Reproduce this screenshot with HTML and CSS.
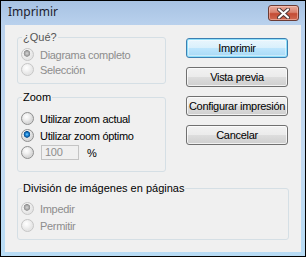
FILE: index.html
```html
<!DOCTYPE html>
<html lang="es">
<head>
    <meta charset="UTF-8">
    <title>Imprimir</title>
    <link rel="stylesheet" href="styles.css">
</head>
<body>
    <div class="window">
        <div class="titlebar">
            <span class="title">Imprimir</span>
            <button class="close" title="Cerrar">
                <svg width="13" height="11" viewBox="0 0 13 11">
                    <path d="M2 1.5 L11 9.5 M11 1.5 L2 9.5" stroke="#4a3636" stroke-width="4" stroke-linecap="round"/>
                    <path d="M2 1.5 L11 9.5 M11 1.5 L2 9.5" stroke="#ffffff" stroke-width="2.2" stroke-linecap="round"/>
                </svg>
            </button>
        </div>

        <div class="client">
            <div class="top">
                <div class="options">
                    <fieldset class="group group-what disabled">
                        <legend>¿Qué?</legend>
                        <label class="radio"><span class="dot checked"></span>Diagrama completo</label>
                        <label class="radio"><span class="dot"></span>Selección</label>
                    </fieldset>

                    <fieldset class="group group-zoom">
                        <legend>Zoom</legend>
                        <label class="radio"><span class="dot"></span>Utilizar zoom actual</label>
                        <label class="radio"><span class="dot checked"></span>Utilizar zoom óptimo</label>
                        <label class="radio"><span class="dot"></span><span class="num">100</span><span class="pct">%</span></label>
                    </fieldset>
                </div>

                <div class="actions">
                    <button class="btn default">Imprimir</button>
                    <button class="btn">Vista previa</button>
                    <button class="btn">Configurar impresión</button>
                    <button class="btn">Cancelar</button>
                </div>
            </div>

            <fieldset class="group group-split disabled">
                <legend>División de imágenes en páginas</legend>
                <label class="radio"><span class="dot checked"></span>Impedir</label>
                <label class="radio"><span class="dot"></span>Permitir</label>
            </fieldset>
        </div>
    </div>
</body>
</html>
```

FILE: styles.css
```css
* {
    margin: 0;
    padding: 0;
    box-sizing: border-box;
}

body {
    background-color: #ffffff;
    font-family: "Liberation Sans", Arial, sans-serif;
    font-size: 11px;
    letter-spacing: -0.3px;
    color: #000;
}

.window {
    width: 306px;
    height: 257px;
    border: 1px solid #000;
    padding: 0 4px 4px 4px;
    background: linear-gradient(to bottom, #a7c2e3 0, #b9d1ed 24px, #c4daf1 60%, #b8dcf5 100%);
    display: flex;
    flex-direction: column;
}

.titlebar {
    height: 24px;
    display: flex;
    justify-content: space-between;
    align-items: flex-start;
}

.title {
    font-family: "Noto Sans", sans-serif;
    font-size: 12px;
    letter-spacing: 0;
    line-height: 16px;
    padding: 3px 0 0 3px;
    color: #1b1b2e;
}

.close {
    width: 31px;
    height: 16px;
    margin: 4px 2px 0 0;
    border: 1px solid #6b3b34;
    border-radius: 3px;
    background: linear-gradient(to bottom, #e9a99b 0, #d9826f 45%, #c44b35 55%, #cf6a52 100%);
    box-shadow: inset 0 0 0 1px rgba(255, 210, 200, 0.5);
    display: flex;
    justify-content: center;
    align-items: center;
}

.close svg {
    display: block;
}

.client {
    flex: 1;
    background-color: #f0f0f0;
    padding: 0 12px;
}

.top {
    display: flex;
}

.options {
    width: 149px;
    margin-top: 6px;
}

.group {
    border: 1px solid #d5dfe5;
    border-radius: 3px;
    padding: 0 0 0 3px;
    min-width: 0;
}

.group legend {
    line-height: 13px;
    letter-spacing: 0;
    padding: 0 1px;
    margin-left: 1px;
}

.group-what {
    padding-top: 3px;
    padding-bottom: 6px;
}

.group-what .radio {
    height: 15px;
}

.group-what legend {
    color: #555;
}

.group-zoom {
    margin-top: 7px;
    padding-top: 6px;
    padding-bottom: 10px;
}

.group-split {
    width: 272px;
    margin-top: 10px;
    padding-top: 5px;
    padding-bottom: 5px;
}

.radio {
    display: flex;
    align-items: center;
    height: 17px;
    white-space: nowrap;
}

.disabled .radio {
    color: #8d8d8d;
}

.dot {
    width: 13px;
    height: 13px;
    margin-right: 6px;
    border-radius: 50%;
    border: 1px solid #8e8f8f;
    background: radial-gradient(circle at 40% 35%, #ffffff 0, #f0f0f0 3px, #d8d8d8 6px);
    flex-shrink: 0;
}

.dot.checked {
    background:
        radial-gradient(circle at 45% 40%, #7fd1ff 0, #1b86d8 1.5px, #0b4d8c 3px, rgba(255, 255, 255, 0) 3.6px),
        radial-gradient(circle at 40% 35%, #ffffff 0, #f0f0f0 3px, #d8d8d8 6px);
}

.disabled .dot {
    border-color: #c6c6c6;
    background: radial-gradient(circle at 40% 35%, #ffffff 0, #f4f4f4 3px, #e6e6e6 6px);
}

.disabled .dot.checked {
    background:
        radial-gradient(circle at 45% 40%, #d6d6d6 0, #a9a9a9 2px, #8f8f8f 3px, rgba(255, 255, 255, 0) 3.6px),
        radial-gradient(circle at 40% 35%, #ffffff 0, #f4f4f4 3px, #e6e6e6 6px);
}

.num {
    width: 38px;
    height: 15px;
    margin-left: 1px;
    border: 1px solid #c4c4c4;
    background: #f0f0f0;
    color: #8d8d8d;
    padding-left: 3px;
    line-height: 13px;
}

.pct {
    margin-left: 8px;
}

.actions {
    margin-left: 20px;
    margin-top: 13px;
    display: flex;
    flex-direction: column;
    gap: 9px;
}

.btn {
    width: 102px;
    height: 20px;
    border: 1px solid #707070;
    border-radius: 3px;
    font-family: "Liberation Sans", Arial, sans-serif;
    font-size: 11px;
    letter-spacing: -0.3px;
    color: #000;
    white-space: nowrap;
    background: linear-gradient(to bottom, #f2f2f2 0, #ebebeb 50%, #dddddd 51%, #cfcfcf 100%);
    box-shadow: inset 0 0 0 1px rgba(255, 255, 255, 0.7);
}

.btn.default {
    border-color: #3c7fb1;
    background: linear-gradient(to bottom, #eaf6fd 0, #d9f0fc 50%, #bee6fd 51%, #a7d9f5 100%);
    box-shadow: inset 0 0 0 1px #8ee0fb, inset 0 0 0 2px rgba(255, 255, 255, 0.4);
}
```
